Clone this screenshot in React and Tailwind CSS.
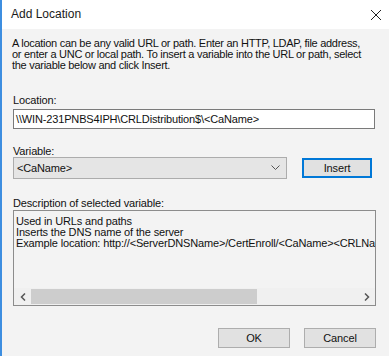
export default function App() {
  const font = { fontFamily: '"Liberation Sans", Arial, sans-serif' };
  return (
    <div
      className="w-[389px] h-[356px] flex flex-col border-l-2 border-[#3d8ee0] bg-[#f3f3f3] text-[11px] leading-[11px] text-[#111] tracking-[-0.15px] overflow-hidden"
      style={font}
    >
      <div className="h-[29px] bg-white flex items-center justify-between pl-[9px] pr-[6px] shrink-0">
        <span className="text-[12px] tracking-normal text-[#1a1a1a]">Add Location</span>
        <svg width="14" height="14" viewBox="0 0 14 14" className="text-[#222]">
          <path d="M2 2 L12 12 M12 2 L2 12" stroke="currentColor" strokeWidth="1" fill="none" />
        </svg>
      </div>

      <div className="flex flex-col pl-[10px] pt-[9px]">
        <p className="whitespace-nowrap tracking-[-0.28px]">
          A location can be any valid URL or path. Enter an HTTP, LDAP, file address,
          <br />
          or enter a UNC or local path. To insert a variable into the URL or path, select
          <br />
          the variable below and click Insert.
        </p>

        <label className="mt-[24px] pl-[1px]">Location:</label>
        <div className="mt-[3px] w-[362px] h-[20px] bg-white border border-[#7a7a7a] flex items-center px-[2px] ml-[1px]">
          <span className="whitespace-nowrap">\\WIN-231PNBS4IPH\CRLDistribution$\&lt;CaName&gt;</span>
        </div>

        <label className="mt-[17px] pl-[1px]">Variable:</label>
        <div className="flex items-center ml-[1px]">
          <div className="w-[274px] h-[22px] bg-[#e5e5e5] border border-[#acacac] flex items-center justify-between pl-[3px] pr-[6px]">
            <span>&lt;CaName&gt;</span>
            <svg width="9" height="6" viewBox="0 0 9 6">
              <path d="M0.5 0.5 L4.5 4.5 L8.5 0.5" stroke="#555" strokeWidth="1" fill="none" />
            </svg>
          </div>
          <button className="ml-[15px] w-[70px] h-[20px] bg-[#e1e1e1] border-2 border-[#0078d7] flex items-center justify-center">
            Insert
          </button>
        </div>

        <label className="mt-[19px] pl-[1px]">Description of selected variable:</label>
        <div className="mt-[1px] ml-[1px] w-[363px] h-[96px] border border-[#8c8c8c] bg-[#f3f3f3] flex flex-col justify-between overflow-hidden">
          <div className="pt-[5px] pl-[2px] whitespace-nowrap leading-[11px]">
            <div>Used in URLs and paths</div>
            <div>Inserts the DNS name of the server</div>
            <div>Example location: http://&lt;ServerDNSName&gt;/CertEnroll/&lt;CaName&gt;&lt;CRLNameSuffix&gt;</div>
          </div>
          <div className="h-[17px] flex items-center bg-[#f0f0f0]">
            <div className="w-[17px] h-full flex items-center justify-center">
              <svg width="6" height="8" viewBox="0 0 6 8">
                <path d="M5 0.5 L1.5 4 L5 7.5" stroke="#555" strokeWidth="1.5" fill="none" />
              </svg>
            </div>
            <div className="w-[226px] h-[15px] bg-[#cdcdcd]" />
            <div className="flex-1" />
            <div className="w-[17px] h-full flex items-center justify-center">
              <svg width="6" height="8" viewBox="0 0 6 8">
                <path d="M1 0.5 L4.5 4 L1 7.5" stroke="#555" strokeWidth="1.5" fill="none" />
              </svg>
            </div>
          </div>
        </div>

        <div className="mt-[22px] flex justify-end gap-[14px] pr-[13px]">
          <button className="w-[72px] h-[20px] bg-[#e1e1e1] border border-[#adadad] flex items-center justify-center">
            OK
          </button>
          <button className="w-[72px] h-[20px] bg-[#e1e1e1] border border-[#adadad] flex items-center justify-center">
            Cancel
          </button>
        </div>
      </div>
    </div>
  );
}
